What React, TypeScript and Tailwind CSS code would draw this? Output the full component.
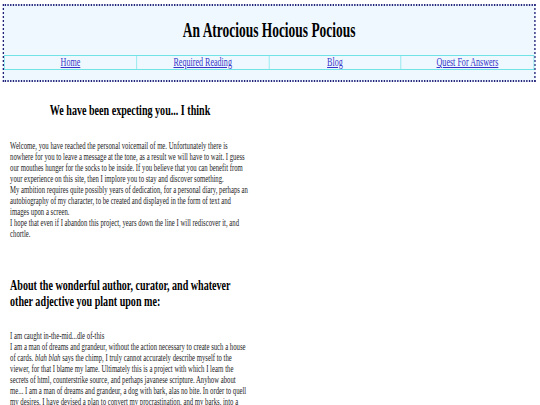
import React from 'react';

const navLinks = ['Home', 'Required Reading', 'Blog', 'Quest For Answers'] as const;

// the reference is a wide page squeezed into 540px, so the page is laid out at 804px and scaled on x
export default function App() {
  return (
    <div className="min-h-screen w-full overflow-hidden bg-white">
      <div className="w-[804px] origin-top-left scale-x-[0.672] pt-[4px] pb-[40px] font-['Liberation_Serif',serif] text-black">
        <header className="ml-[4px] mr-[7px] border-2 border-dotted border-[#23237a] bg-[#f0f8ff] pt-[13px] pb-[10px]">
          <h1 className="text-center text-[20px] leading-[23px] font-bold">An Atrocious Hocious Pocious</h1>
          <nav className="mt-[13px] grid grid-cols-4 border-x-[1.5px] border-y border-[#6fe3e6]">
            {navLinks.map((label, i) => (
              <div
                key={label}
                className={
                  i < navLinks.length - 1
                    ? 'border-r-[1.5px] border-[#6fe3e6] text-center text-[12px] leading-[13px]'
                    : 'text-center text-[12px] leading-[13px]'
                }
              >
                <a href="#" className="text-[#3434c8] underline">
                  {label}
                </a>
              </div>
            ))}
          </nav>
        </header>

        <main className="ml-[15px] w-[357px]">
          <h2 className="mt-[20px] text-center text-[15px] leading-[16px] font-bold">
            We have been expecting you... I think
          </h2>
          <p className="mt-[22px] text-[10px] leading-[11px] text-[#1c1c1c]">
            Welcome, you have reached the personal voicemail of me. Unfortunately there is nowhere for you to leave a
            message at the tone, as a result we will have to wait. I guess our mouthes hunger for the socks to be inside.
            If you believe that you can benefit from your experience on this site, then I implore you to stay and
            discover something.
            <br />
            My ambition requires quite possibly years of dedication, for a personal diary, perhaps an autobiography of my
            character, to be created and displayed in the form of text and images upon a screen.
            <br />
            I hope that even if I abandon this project, years down the line I will rediscover it, and chortle.
          </p>

          <h2 className="mt-[38px] text-[15px] leading-[16px] font-bold">
            About the wonderful author, curator, and whatever other adjective you plant upon me:
          </h2>
          <p className="mt-[21px] text-[10px] leading-[11px] text-[#1c1c1c]">
            I am caught in-the-mid...dle of-this
            <br />
            I am a man of dreams and grandeur, without the action necessary to create such a house of cards.{' '}
            <i>blah blah</i> says the chimp, I truly cannot accurately describe myself to the viewer, for that I blame my
            lame. Ultimately this is a project with which I learn the secrets of html, counterstrike source, and perhaps
            javanese scripture. Anyhow about me... I am a man of dreams and grandeur, a dog with bark, alas no bite. In
            order to quell my desires, I have devised a plan to convert my procrastination, and my barks, into a bite.
          </p>
        </main>
      </div>
    </div>
  );
}
